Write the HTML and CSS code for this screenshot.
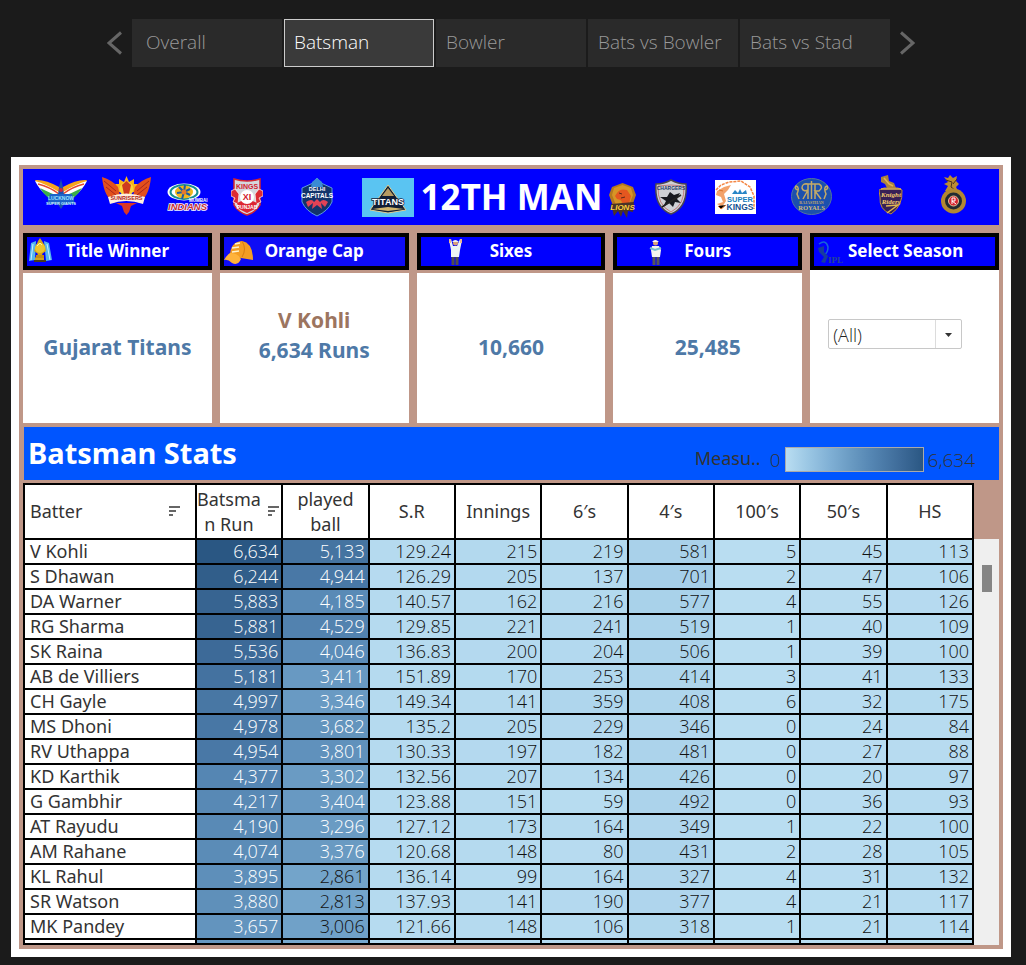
FILE: index.html
```html
<!DOCTYPE html>
<html lang="en">
<head>
<meta charset="utf-8">
<title>12TH MAN</title>
<link rel="stylesheet" href="styles.css">
</head>
<body>
<nav class="story">
  <button class="arrow" aria-label="Previous"><svg width="16" height="24" viewBox="0 0 16 24"><path d="M14 1.500L2 12L14 22.500"/></svg></button>
  <div class="tabs">
    <button class="tab first">Overall</button>
    <button class="tab active">Batsman</button>
    <button class="tab">Bowler</button>
    <button class="tab">Bats vs Bowler</button>
    <button class="tab">Bats vs Stad</button>
  </div>
  <button class="arrow" aria-label="Next"><svg width="16" height="24" viewBox="0 0 16 24"><path d="M2 1.500L14 12L2 22.500"/></svg></button>
</nav>

<main class="sheet">
<div class="board">
  <header class="banner">
    <svg class="logo g12" width="52" height="44" viewBox="35 175 52 44" aria-label="Lucknow">
      <path d="M35 180Q45 179 59 187L59 197Q45 199 35 180" fill="#f6a51c"/>
      <path d="M35 181Q46 184 59 192L59 200Q44 198 35 181" fill="#fff"/>
      <path d="M40 188Q50 193 58 196V202Q46 199 40 188" fill="#3cae49"/>
      <path d="M38 184Q50 187 59 194" stroke="#e5482e" stroke-width="1.500" fill="none"/>
      <path d="M87 180Q77 179 63 187V197Q77 199 87 180" fill="#f6a51c"/>
      <path d="M87 181Q76 184 63 192V200Q78 198 87 181" fill="#fff"/>
      <path d="M82 188Q72 193 64 196V202Q76 199 82 188" fill="#3cae49"/>
      <path d="M84 184Q72 187 63 194" stroke="#e5482e" stroke-width="1.500" fill="none"/>
      <path d="M59 187L61 179L63 187L65 203L61 209L57 203Z" fill="#1b51ad"/>
      <circle cx="61" cy="190" r="2" fill="#d7263d"/>
      <path d="M50 194H72L75 204H47Z" fill="#1c63c8"/>
      <text x="61" y="200" text-anchor="middle" font-size="5" class="lt" fill="#9be4ff">LUCKNOW</text>
      <text x="61" y="205" text-anchor="middle" font-size="4" class="lt" fill="#c9f0ff">SUPER GIANTS</text>
    </svg>
    <svg class="logo g15" width="50" height="44" viewBox="102 175 50 44" aria-label="Sunrisers">
      <path d="M126.500 176L129 182L134 179L134 184L138 184L135 192H118L115 184L119 184L119 179L124 182Z" fill="#f9b41a"/>
      <path d="M102 177Q112 180 118 187L120 196H112L115 203Q104 198 102 177Z" fill="#e2501d"/>
      <path d="M151 177Q141 180 135 187L133 196H141L138 203Q149 198 151 177Z" fill="#e2501d"/>
      <path d="M104 181L116 191M106 187L116 195M149 181L137 191M147 187L137 195" stroke="#a9261c" stroke-width="1"/>
      <circle cx="126.500" cy="189" r="7" fill="#fbd13a"/>
      <path d="M122 185L126.500 181L131 185L129 194H124Z" fill="#cf3a1d"/>
      <path d="M116 203H137L131 206L129 212L126.500 215L124 212L122 206Z" fill="#d93625"/>
      <path d="M108 197Q126 190 145 197L143 204Q126 198 110 204Z" fill="#fff0df"/>
      <text x="126.500" y="200" text-anchor="middle" font-size="5.500" class="lt" fill="#ad2518">SUNRISERS</text>
    </svg>
    <svg class="logo g16" width="42" height="44" viewBox="167 175 42 44" aria-label="Mumbai Indians">
      <ellipse cx="184" cy="192" rx="16.500" ry="8.500" fill="#fff"/>
      <ellipse cx="184" cy="192" rx="13.500" ry="7" fill="none" stroke="#168e91" stroke-width="2"/>
      <ellipse cx="184" cy="192" rx="9" ry="6.500" fill="#f0b71b"/>
      <path d="M184 192L179 187M184 192L185 185M184 192L190 189M184 192L190 195M184 192L182 199M184 192L177 193" stroke="#195ba5" stroke-width="2"/>
      <circle cx="184" cy="192" r="2.500" fill="#e6792b"/>
      <text x="189" y="202" font-size="4.500" class="lt" fill="#fff">MUMBAI</text>
      <text x="168" y="210" font-size="9.500" class="lt it" fill="#c72c36" stroke="#f4f7ff" stroke-width="1.500" paint-order="stroke">INDIANS</text>
    </svg>
    <svg class="logo g22" width="32" height="44" viewBox="231 175 32 44" aria-label="Kings XI Punjab">
      <path d="M234 179Q247 183 260 179V205Q256 212 247 215Q238 212 234 205Z" fill="#d4d7dd" stroke="#d3242e" stroke-width="1.500"/>
      <path d="M231 191L235 189L239 194L238 204L233 202L235 198L231 196ZM263 191L259 189L255 194L256 204L261 202L259 198L263 196Z" fill="#dc2b34" stroke="#fff" stroke-width=".7"/>
      <path d="M237 203Q247 197 257 203L255 209L247 213L239 209Z" fill="#dc2633"/>
      <circle cx="247" cy="197" r="7" fill="#fff"/>
      <text x="247" y="189" text-anchor="middle" font-size="7" class="lt" fill="#d3202e">KINGS</text>
      <text x="247" y="200" text-anchor="middle" font-size="9" class="lt" fill="#d3202e">XI</text>
      <text x="247" y="209" text-anchor="middle" font-size="5" class="lt" fill="#fff">PUNJAB</text>
    </svg>
    <svg class="logo g37" width="34" height="44" viewBox="300 175 34 44" aria-label="Delhi Capitals">
      <path d="M302 188L313 183L317 178L321 183L332 188V202Q328 211 317 216Q306 211 302 202Z" fill="#12346b" stroke="#5c9be0" stroke-width="1"/>
      <path d="M311 187L312 182L317 178L322 182L323 187Z" fill="#3b8bd3"/>
      <path d="M306 202Q312 198 314 202L317 199L320 202Q323 198 328 202L325 207L321 203L322 209L317 205L312 209L313 203L308 207Z" fill="#e24256"/>
      <text x="317" y="191" text-anchor="middle" font-size="5.500" class="lt" fill="#fff">DELHI</text>
      <text x="317" y="198" text-anchor="middle" font-size="6.500" class="lt" fill="#fff">CAPITALS</text>
    </svg>
    <svg class="logo g29" width="52" height="44" viewBox="362 175 52 44" aria-label="Gujarat Titans">
      <path d="M362 178H414V217H362Z" fill="#5ac4f2"/>
      <path d="M388 185L406 210L388 213L370 210Z" fill="#111e35" stroke="#e1ce91" stroke-width="1"/>
      <path d="M388 188L394 196H382Z" fill="#b79b62"/>
      <path d="M372 209L388 207L404 209L388 211Z" fill="#d2b66d"/>
      <text x="388" y="205" text-anchor="middle" font-size="9" class="lt" fill="#fff" stroke="#14213a" stroke-width="1.500" paint-order="stroke">TITANS</text>
    </svg>
    <h1>12TH MAN</h1>
    <svg class="logo" width="27" height="44" viewBox="610 175 27 44" aria-label="Gujarat Lions">
      <path d="M623.500 183L634 187L637 195L633 206H614L610 195L613 187Z" fill="#b3781f"/>
      <path d="M623.500 185L632 188L634 195L630 205H617L613 195L615 188Z" fill="#d79426"/>
      <path d="M618 193Q621 188 628 190L632 196L630 204L622 205Q625 200 618 199L616 196Z" fill="#e45720"/>
      <path d="M620 193L623 194M622 198L626 197" stroke="#5b281a" stroke-width="1"/>
      <path d="M612 204L615 216L619 211L622 217L624 211L628 218L629 211L634 212L635 202Z" fill="#4a3327"/>
      <text x="623.500" y="210" text-anchor="middle" font-size="8" class="lt it" fill="#ffd13d">LIONS</text>
    </svg>
    <svg class="logo g19" width="32" height="44" viewBox="656 175 32 44" aria-label="Chargers">
      <path d="M657 184Q665 184 672 180Q679 184 687 184Q689 207 672 214Q655 207 657 184Z" fill="#ced0d5" stroke="#4b4551" stroke-width="1.500"/>
      <path d="M659 186Q672 184 685 186Q686 205 672 212Q658 205 659 186Z" fill="none" stroke="#b95858" stroke-width=".7"/>
      <path d="M671 192L675 195L681 193L678 199L682 203L676 202L674 207L670 203L664 207L667 201L661 197L668 197Z" fill="#17191f"/>
      <path d="M663 207L682 195" stroke="#222" stroke-width="1.500"/>
      <text x="672" y="190" text-anchor="middle" font-size="5" class="lt" fill="#243c69">CHARGERS</text>
    </svg>
    <svg class="logo g28" width="41" height="44" viewBox="716 175 41 44" aria-label="Chennai Super Kings">
      <path d="M716 180H757V214H716Z" fill="#fff"/>
      <path d="M717 190L722 185L730 182L742 181L751 187L755 196V209" fill="none" stroke="#f48643" stroke-width="1.500" stroke-dasharray="3 1"/>
      <path d="M718 191L725 187L732 185L729 190L725 194L727 201L723 207L718 204L724 202L722 197L717 195Z" fill="#f3a26a"/>
      <path d="M720 190L724 191M719 206L722 209L727 205" stroke="#db722b" stroke-width="1"/>
      <path d="M733 194L736 190L739 193L741 189L743 193L747 190L748 194Z" fill="#2785c6"/>
      <text x="741" y="202" text-anchor="middle" font-size="7.500" class="lt" fill="#1780bd">SUPER</text>
      <text x="741" y="210" text-anchor="middle" font-size="8.500" class="lt" fill="#134f91">KINGS</text>
    </svg>
    <svg class="logo g35" width="42" height="44" viewBox="792 175 42 44" aria-label="Rajasthan Royals">
      <ellipse cx="812.500" cy="196.500" rx="20" ry="18" fill="#1c50ad" stroke="#53739f" stroke-width="1"/>
      <g fill="none" stroke="#c4aa67" stroke-width="1.500">
        <path d="M809 199V184Q803 183 803 188Q804 192 809 190M809 190L804 199M816 199V184H820Q825 187 820 191H816L822 199M806 184H819M812.500 181V199M799 190Q795 189 797 186Q801 187 798 194L800 199M826 190Q830 189 828 186Q824 187 827 194L825 199"/>
      </g>
      <text x="812.500" y="204" text-anchor="middle" font-size="4" class="sf" fill="#c4aa67">RAJASTHAN</text>
      <text x="812.500" y="210" text-anchor="middle" font-size="6.500" class="sf" fill="#d4bd79">ROYALS</text>
    </svg>
    <svg class="logo g46" width="24" height="44" viewBox="879 175 24 44" aria-label="Knight Riders">
      <path d="M881 177L888 175L889 181L894 183L896 188L888 190L885 184L881 182Z" fill="#aa8240"/>
      <path d="M879 190L884 188H898L902 190Q903 206 891 214Q879 210 880 197Z" fill="#372056" stroke="#bc8c3d" stroke-width="1"/>
      <path d="M884 178L889 184L893 186M881 189H901M886 206L898 205L887 213" stroke="#e0b552" stroke-width="1.500" fill="none"/>
      <text x="891" y="197" text-anchor="middle" font-size="7" class="sf it" fill="#f4cb6d">Knight</text>
      <text x="891" y="204" text-anchor="middle" font-size="7" class="sf it" fill="#f4cb6d">Riders</text>
    </svg>
    <svg class="logo g38" width="25" height="44" viewBox="941 175 25 44" aria-label="Royal Challengers">
      <path d="M944 177L948 178L950 175L953 178L957 176L956 181L959 184L956 187L958 191H945L948 186L944 184L948 182Z" fill="#bc8c32"/>
      <path d="M946 180L952 182L951 187L955 190M957 179L953 184" stroke="#49311e" stroke-width="1" fill="none"/>
      <circle cx="953.500" cy="201" r="12.500" fill="#b28832"/>
      <circle cx="953.500" cy="201" r="8.500" fill="#222b31"/>
      <circle cx="953.500" cy="201" r="5" fill="#d52732" stroke="#e6c59b" stroke-width="1"/>
      <path d="M952 198V204M952 198H955V201H952L956 204" stroke="#fff" stroke-width="1" fill="none"/>
    </svg>
  </header>

  <section class="cards">
    <article class="card">
      <h2><svg width="27" height="29" viewBox="27 237 27 29"><path d="M31 243L36 241L35 260L29 261ZM44 241L49 243L52 260L46 261Z" fill="#54b7ec"/><path d="M33 244L31 260M47 244L50 260" stroke="#c9efff"/><path d="M36 246L38 241L40 238L42 241L45 246L46 251L42 254L44 258V262H35V258L38 254L34 251Z" fill="#d3a31c"/><circle cx="40" cy="248" r="5" fill="#efc62d"/><path d="M36 255H44V258H36Z" fill="#c48c13"/><path d="M37 246L40 243L42 245" stroke="#fff4a0" fill="none"/><path d="M34 260H46V262H34Z" fill="#493a1a"/></svg><span>Title Winner</span></h2>
      <div class="body"><p>Gujarat Titans</p></div>
    </article>
    <article class="card">
      <h2 class="cap"><svg width="31" height="29" viewBox="224 237 31 29"><path d="M230 256Q230 242 242 241Q253 243 253 260L241 258Z" fill="#f49d23"/><path d="M224 260Q227 255 230 253Q238 253 241 259Q238 266 232 263Q228 259 224 260Z" fill="#ffb33c"/><path d="M242 241Q247 249 242 257" stroke="#d87d12" fill="none"/><path d="M232 248L239 247M232 252L239 251M235 244L240 243" stroke="#fff3cf" stroke-width="1.500"/></svg><span>Orange Cap</span></h2>
      <div class="body raised"><p class="brown">V Kohli</p><p>6,634 Runs</p></div>
    </article>
    <article class="card">
      <h2><svg width="45" height="29" viewBox="421 237 45 29"><path d="M453 255V265M457 255V265" stroke="#514c4e" stroke-width="3"/><path d="M449 240L451 239L453 246H457L460 239L462 240L460 250L459 257H451V250Z" fill="#eef4f5"/><path d="M450 243V239M461 243V239" stroke="#e9b693" stroke-width="2"/><circle cx="455.500" cy="243" r="2.500" fill="#d99f79"/><path d="M452 242Q455 238 459 242Z" fill="#eee"/></svg><span>Sixes</span></h2>
      <div class="body"><p>10,660</p></div>
    </article>
    <article class="card">
      <h2><svg width="48" height="29" viewBox="618 237 48 29"><path d="M655 254V265M659 254V265" stroke="#55555b" stroke-width="3"/><path d="M653 246H660L662 250L661 257H653L652 250Z" fill="#f4f5ee"/><path d="M651 248L656 250L662 248" stroke="#77bed0" stroke-width="2" fill="none"/><circle cx="656.500" cy="243" r="2.500" fill="#d8a27c"/><path d="M653 242Q656 238 660 242Z" fill="#f5f5f5"/></svg><span>Fours</span></h2>
      <div class="body"><p>25,485</p></div>
    </article>
    <article class="card season">
      <h2><svg width="33" height="29" viewBox="815 237 33 29"><path d="M820 244Q827 239 829 247Q829 253 825 255" fill="none" stroke="#1765d6" stroke-width="1.500"/><path d="M819 248L825 246L825 252L829 256L826 263L822 262L825 257L820 252Z" fill="#173b9f"/><text x="829" y="263" font-size="9" class="sf" fill="#244696">IPL</text></svg><span id="season-label">Select Season</span></h2>
      <div class="body">
        <div class="picker">
          <select aria-labelledby="season-label"><option>(All)</option></select>
          <svg width="27" height="28" viewBox="0 0 27 28"><path d="M.500 0V28" stroke="#dcdcdc"/><path d="M10 13H17L13.500 17Z" fill="#333"/></svg>
        </div>
      </div>
    </article>
  </section>

  <section class="stats">
    <h2>Batsman Stats</h2>
    <div class="legend"><span class="measure">Measu..</span><span class="bound">0</span><div class="ramp"></div><span class="bound">6,634</span></div>
  </section>

  <section class="grid">
    <div class="scroll-view">
      <table>
        <colgroup><col class="name-col"><col span="9"></colgroup>
        <thead>
          <tr>
            <th><div class="sorted"><span>Batter</span><svg width="11" height="11" viewBox="0 0 11 11"><path d="M0 1H11M0 5H7M0 9H4" stroke="#666" stroke-width="2"/></svg></div></th>
            <th><div class="sorted tight"><span>Batsma<br>n Run</span><svg width="11" height="11" viewBox="0 0 11 11"><path d="M0 1H11M0 5H7M0 9H4" stroke="#666" stroke-width="2"/></svg></div></th>
            <th>played<br>ball</th><th>S.R</th><th>Innings</th><th>6′s</th><th>4′s</th><th>100′s</th><th>50′s</th><th>HS</th>
          </tr>
        </thead>
        <tbody id="rows"></tbody>
      </table>
    </div>
    <div class="track"><div class="thumb"></div></div>
  </section>
</div>
</main>
<script src="script.js"></script>
</body>
</html>
```
FILE: styles.css
```css
* { box-sizing: border-box; }
body {
  margin: 0;
  padding: 19px 15px 8px 11px;
  background: #1b1b1b;
  color: #333;
  font-family: "Noto Sans", "Open Sans", sans-serif;
  font-size: 18px;
}
h1, h2, p { margin: 0; }
button, select { font: inherit; }

.story { display: flex; justify-content: center; align-items: center; gap: 9px; }
.arrow { padding: 0; border: 0; background: none; display: flex; }
.arrow path { fill: none; stroke: #666; stroke-width: 3; }
.tabs { display: flex; gap: 2px; }
.tab {
  width: 150px; height: 48px; padding: 0 0 2px 10px;
  border: 0; background: #2a2a2a; color: #999;
  font-family: "Open Sans", sans-serif; font-size: 19px; font-weight: 300; text-align: left; white-space: nowrap;
}
.tab.first { padding-left: 14px; }
.tab.active { padding-left: 9px; border: 1px solid #ccc; background: #3a3a3a; color: #fff; }

.sheet { margin-top: 90px; padding: 8px; background: #fff; }
.board { padding: 4px; background: #bf9788; }

.banner { display: flex; align-items: center; height: 56px; padding-right: 33px; background: #00f; }
.logo { flex: none; }
.g12 { margin-left: 12px; }
.g15 { margin-left: 15px; }
.g16 { margin-left: 15px; }
.g19 { margin-left: 19px; }
.g22 { margin-left: 22px; }
.g28 { margin-left: 28px; }
.g29 { margin-left: 28px; }
.g35 { margin-left: 35px; }
.g37 { margin-left: 37px; }
.g38 { margin-left: 38px; }
.g46 { margin-left: 46px; }
.lt { font-family: "Liberation Sans Narrow", "Liberation Sans", sans-serif; font-weight: 700; }
.sf { font-family: "Liberation Serif", serif; font-weight: 700; }
.it { font-style: italic; }
.banner h1 { flex: 1 1 0; min-width: 0; color: #fff; font-size: 35px; line-height: 56px; text-align: center; white-space: nowrap; }

.cards { display: grid; grid-template-columns: repeat(5, 1fr); gap: 8px; padding: 8px 0 4px; }
.card { display: flex; flex-direction: column; gap: 3px; }
.card h2 {
  display: grid; align-items: center; height: 37px;
  border: 4px solid #000; background: #00f; color: #fff; font-size: 17px; line-height: 26px;
}
.card h2.cap { background: #0e0cf5; }
.card h2 > * { grid-area: 1 / 1; }
.card h2 span { padding-bottom: 2px; text-align: center; z-index: 1; }
.body {
  display: flex; flex-direction: column; align-items: center; justify-content: center;
  height: 150px; padding-bottom: 2px; background: #fff; color: #4e79a7; font-size: 21px; font-weight: 700; line-height: 30px;
}
.raised { padding-bottom: 26px; }
.brown { color: #9c755f; }
.season { gap: 0; }
.season .body { height: 153px; padding: 0 37px 25px 18px; align-items: stretch; }
.season h2 span { padding-left: 2px; }
.picker { position: relative; }
.picker select {
  display: block; width: 100%; height: 30px; padding: 0 4px; appearance: none;
  border: 1px solid #c8c8c8; border-radius: 2px; background: #fff; color: #222; font-size: 18px; font-weight: 300;
  font-family: "Open Sans", sans-serif;
}
.picker svg { position: absolute; top: 1px; right: 0; pointer-events: none; }

.stats { display: flex; justify-content: space-between; height: 53px; margin-left: 1px; padding: 0 24px 0 4px; background: #05f; }
.stats h2 { color: #fff; font-size: 29px; line-height: 52px; }
.legend { display: flex; align-items: center; padding-top: 12px; }
.measure { margin-right: 9px; line-height: 24px; padding-bottom: 4px; }
.bound { font-family: "Open Sans", sans-serif; font-size: 19px; font-weight: 300; }
.ramp {
  width: 139px; height: 25px; margin: 0 4px; border: 1px solid #aaa;
  background: linear-gradient(90deg, #b9ddf1, #9bc7e4 16%, #80b0d5 32%, #6a9bc3 47%, #5485b2 63%, #3d6a98 84%, #2a5783);
}

.grid { display: flex; padding-top: 3px; }
.scroll-view { flex: 1; }
table { width: 100%; border-collapse: collapse; table-layout: fixed; background: #fff; }
.name-col { width: 172px; }
th { height: 55px; padding: 0; border: 2px solid #000; font-weight: 400; line-height: 25px; vertical-align: middle; }
.sorted { display: flex; justify-content: space-between; align-items: center; padding: 0 15px 0 5px; }
.sorted.tight { padding: 0 2px 0 0; }
td { height: 25px; padding: 0 3px 0 0; border: 2px solid #000; line-height: 23px; text-align: right; font-family: "Open Sans", sans-serif; font-size: 18px; font-weight: 300; color: #111; }
tbody th { height: 25px; padding-left: 5px; text-align: left; line-height: 23px; }
tbody .cut > * { height: 5px; line-height: 3px; }
td.light { color: #fff; }
.track { width: 25px; margin-top: 56px; padding: 26px 7px 0 8px; background: #efefef; }
.thumb { height: 27px; background: #858585; }
```
FILE: script.js
```javascript
const batters = [
  ["V Kohli", "6,634", "5,133", "129.24", 215, 219, 581, 5, 45, 113],
  ["S Dhawan", "6,244", "4,944", "126.29", 205, 137, 701, 2, 47, 106],
  ["DA Warner", "5,883", "4,185", "140.57", 162, 216, 577, 4, 55, 126],
  ["RG Sharma", "5,881", "4,529", "129.85", 221, 241, 519, 1, 40, 109],
  ["SK Raina", "5,536", "4,046", "136.83", 200, 204, 506, 1, 39, 100],
  ["AB de Villiers", "5,181", "3,411", "151.89", 170, 253, 414, 3, 41, 133],
  ["CH Gayle", "4,997", "3,346", "149.34", 141, 359, 408, 6, 32, 175],
  ["MS Dhoni", "4,978", "3,682", "135.2", 205, 229, 346, 0, 24, 84],
  ["RV Uthappa", "4,954", "3,801", "130.33", 197, 182, 481, 0, 27, 88],
  ["KD Karthik", "4,377", "3,302", "132.56", 207, 134, 426, 0, 20, 97],
  ["G Gambhir", "4,217", "3,404", "123.88", 151, 59, 492, 0, 36, 93],
  ["AT Rayudu", "4,190", "3,296", "127.12", 173, 164, 349, 1, 22, 100],
  ["AM Rahane", "4,074", "3,376", "120.68", 148, 80, 431, 2, 28, 105],
  ["KL Rahul", "3,895", "2,861", "136.14", 99, 164, 327, 4, 31, 132],
  ["SR Watson", "3,880", "2,813", "137.93", 141, 190, 377, 4, 21, 117],
  ["MK Pandey", "3,657", "3,006", "121.66", 148, 106, 318, 1, 21, 114]
];
const ramp = [
  [185, 221, 241], [155, 199, 228], [128, 176, 213], [106, 155, 195],
  [84, 133, 178], [61, 106, 152], [42, 87, 131]
];
const max = 6634;

function shade(value) {
  const t = Math.min(value / max, 1) * (ramp.length - 1);
  const i = Math.min(Math.floor(t), ramp.length - 2);
  const mix = ramp[i].map((c, k) => Math.round(c + (ramp[i + 1][k] - c) * (t - i)));
  return `rgb(${mix.join(",")})`;
}

const body = document.getElementById("rows");
for (const [name, ...values] of batters) {
  const tr = body.insertRow();
  const th = document.createElement("th");
  th.scope = "row";
  th.textContent = name;
  tr.append(th);
  for (const v of values) {
    const n = Number(String(v).replace(",", ""));
    const td = tr.insertCell();
    td.textContent = v;
    td.style.backgroundColor = shade(n);
    if (n > 3100) td.className = "light";
  }
}

// Top edge of the row that continues below the scroll view.
const cut = body.insertRow();
cut.className = "cut";
cut.append(document.createElement("th"));
for (const v of [3500, 2700, 130, 140, 150, 300, 1, 20, 110]) {
  cut.insertCell().style.backgroundColor = shade(v);
}
```
